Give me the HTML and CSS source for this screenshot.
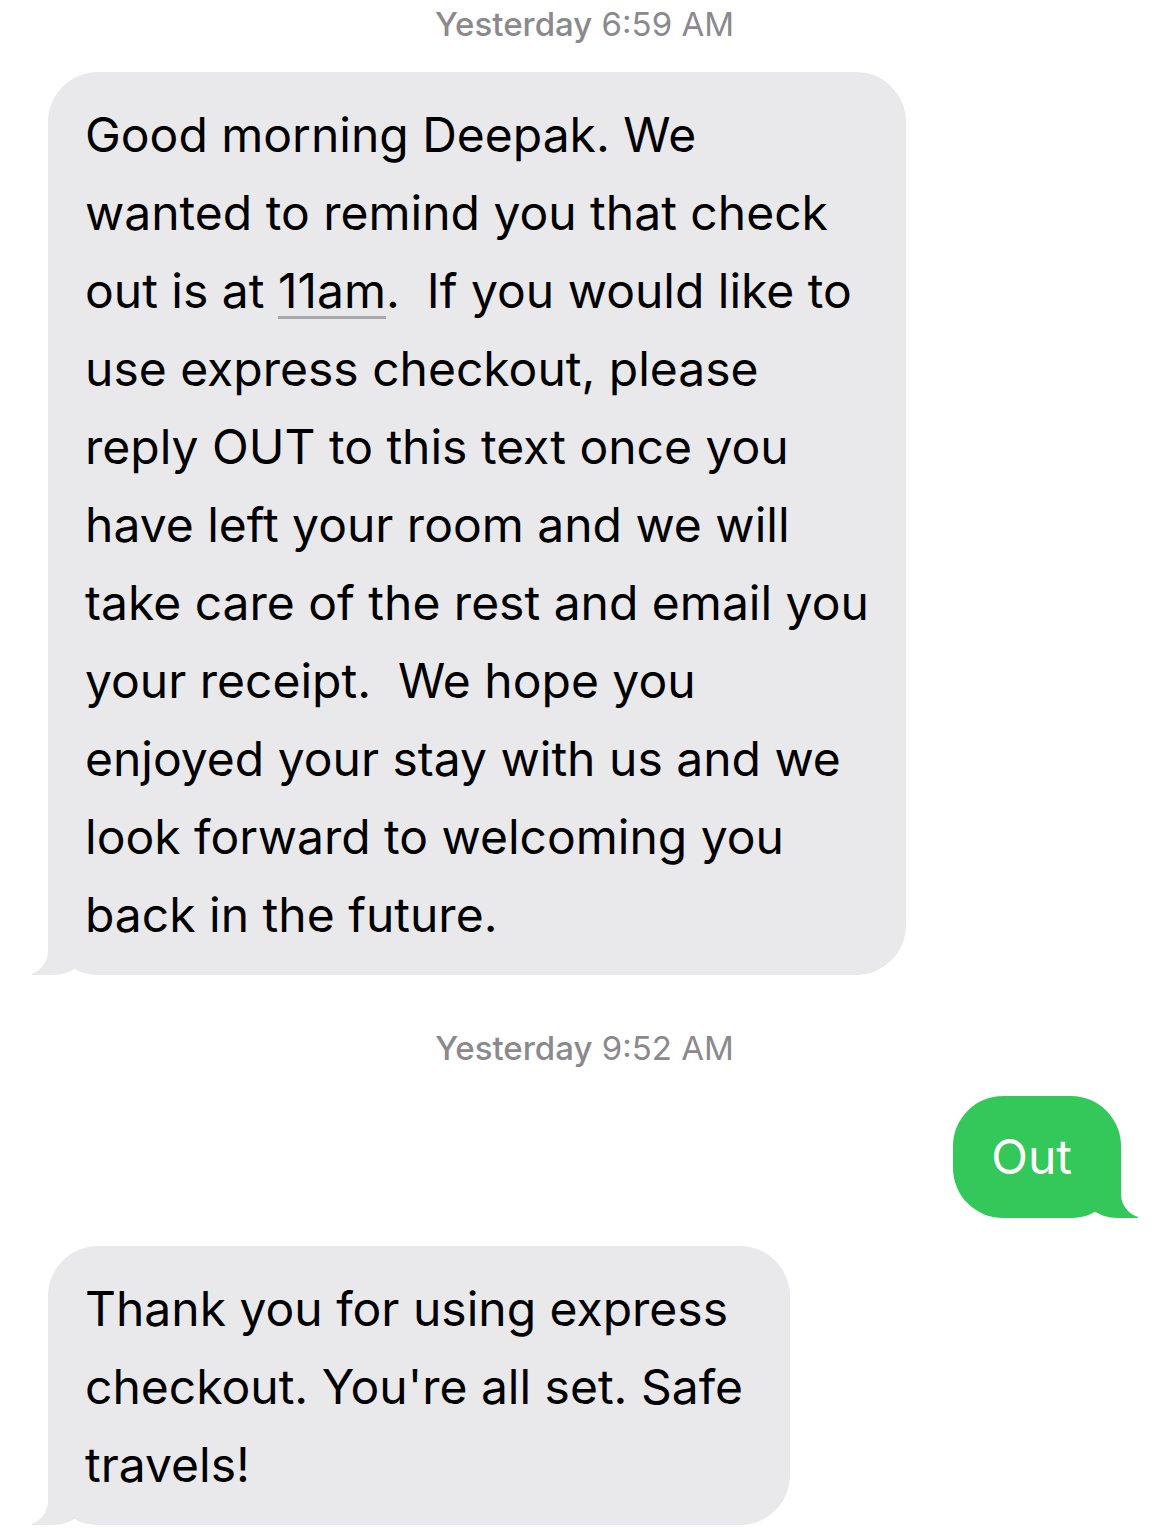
FILE: index.html
```html
<!DOCTYPE html>
<html lang="en">
<head>
  <meta charset="UTF-8">
  <meta name="viewport" content="width=device-width, initial-scale=1.0">
  <title>Messages</title>
  <link rel="stylesheet" href="styles.css">
</head>
<body>

  <div class="chat">
    <p class="stamp"><b>Yesterday</b> 6:59 AM</p>

    <div class="bubble in">
      Good morning Deepak. We<br>
      wanted to remind you that check<br>
      out is at <span class="link">11am</span>.&nbsp; If you would like to<br>
      use express checkout, please<br>
      reply OUT to this text once you<br>
      have left your room and we will<br>
      take care of the rest and email you<br>
      your receipt.&nbsp; We hope you<br>
      enjoyed your stay with us and we<br>
      look forward to welcoming you<br>
      back in the future.
    </div>

    <p class="stamp second"><b>Yesterday</b> 9:52 AM</p>

    <div class="bubble out">Out</div>

    <div class="bubble in last">
      Thank you for using express<br>
      checkout. You're all set. Safe<br>
      travels!
    </div>
  </div>

</body>
</html>
```

FILE: styles.css
```css
body {
  margin: 0;
  background-color: #fff;
  font-family: Inter, "Noto Sans", sans-serif;
}

.chat {
  display: flex;
  flex-direction: column;
  align-items: flex-start;
  padding: 0 49px 0 48px;
}

.stamp {
  align-self: center;
  margin: 0 0 24px;
  font-size: 33px;
  line-height: 48px;
  color: #8a8a8e;
}

.stamp b {
  font-weight: 500;
}

.stamp.second {
  margin-top: 49px;
}

.bubble {
  position: relative;
  z-index: 0;
  padding: 24px 37px 21px;
  border-radius: 50px;
  font-size: 48px;
  line-height: 78px;
  color: #000;
}

.bubble.in {
  background-color: #e9e9eb;
}

.bubble.out {
  align-self: flex-end;
  padding: 22px 49px 22px 38px;
  background-color: #34c759;
  color: #fff;
}

.bubble.last {
  margin-top: 28px;
  padding-right: 47px;
}

/* tails */
.bubble::before,
.bubble::after {
  content: "";
  position: absolute;
  z-index: -1;
  bottom: 0;
  height: 60px;
}

.bubble.in::before {
  left: -16px;
  width: 60px;
  background-color: #e9e9eb;
  border-bottom-right-radius: 40px 34px;
}

.bubble.in::after {
  left: -40px;
  width: 40px;
  background-color: #fff;
  border-bottom-right-radius: 24px;
}

.bubble.out::before {
  right: -17px;
  width: 60px;
  background-color: #34c759;
  border-bottom-left-radius: 40px 34px;
}

.bubble.out::after {
  right: -40px;
  width: 40px;
  background-color: #fff;
  border-bottom-left-radius: 24px;
}

.link {
  text-decoration: underline;
  text-decoration-color: #a9a9ad;
  text-decoration-thickness: 3px;
  text-underline-offset: 8px;
}
```
